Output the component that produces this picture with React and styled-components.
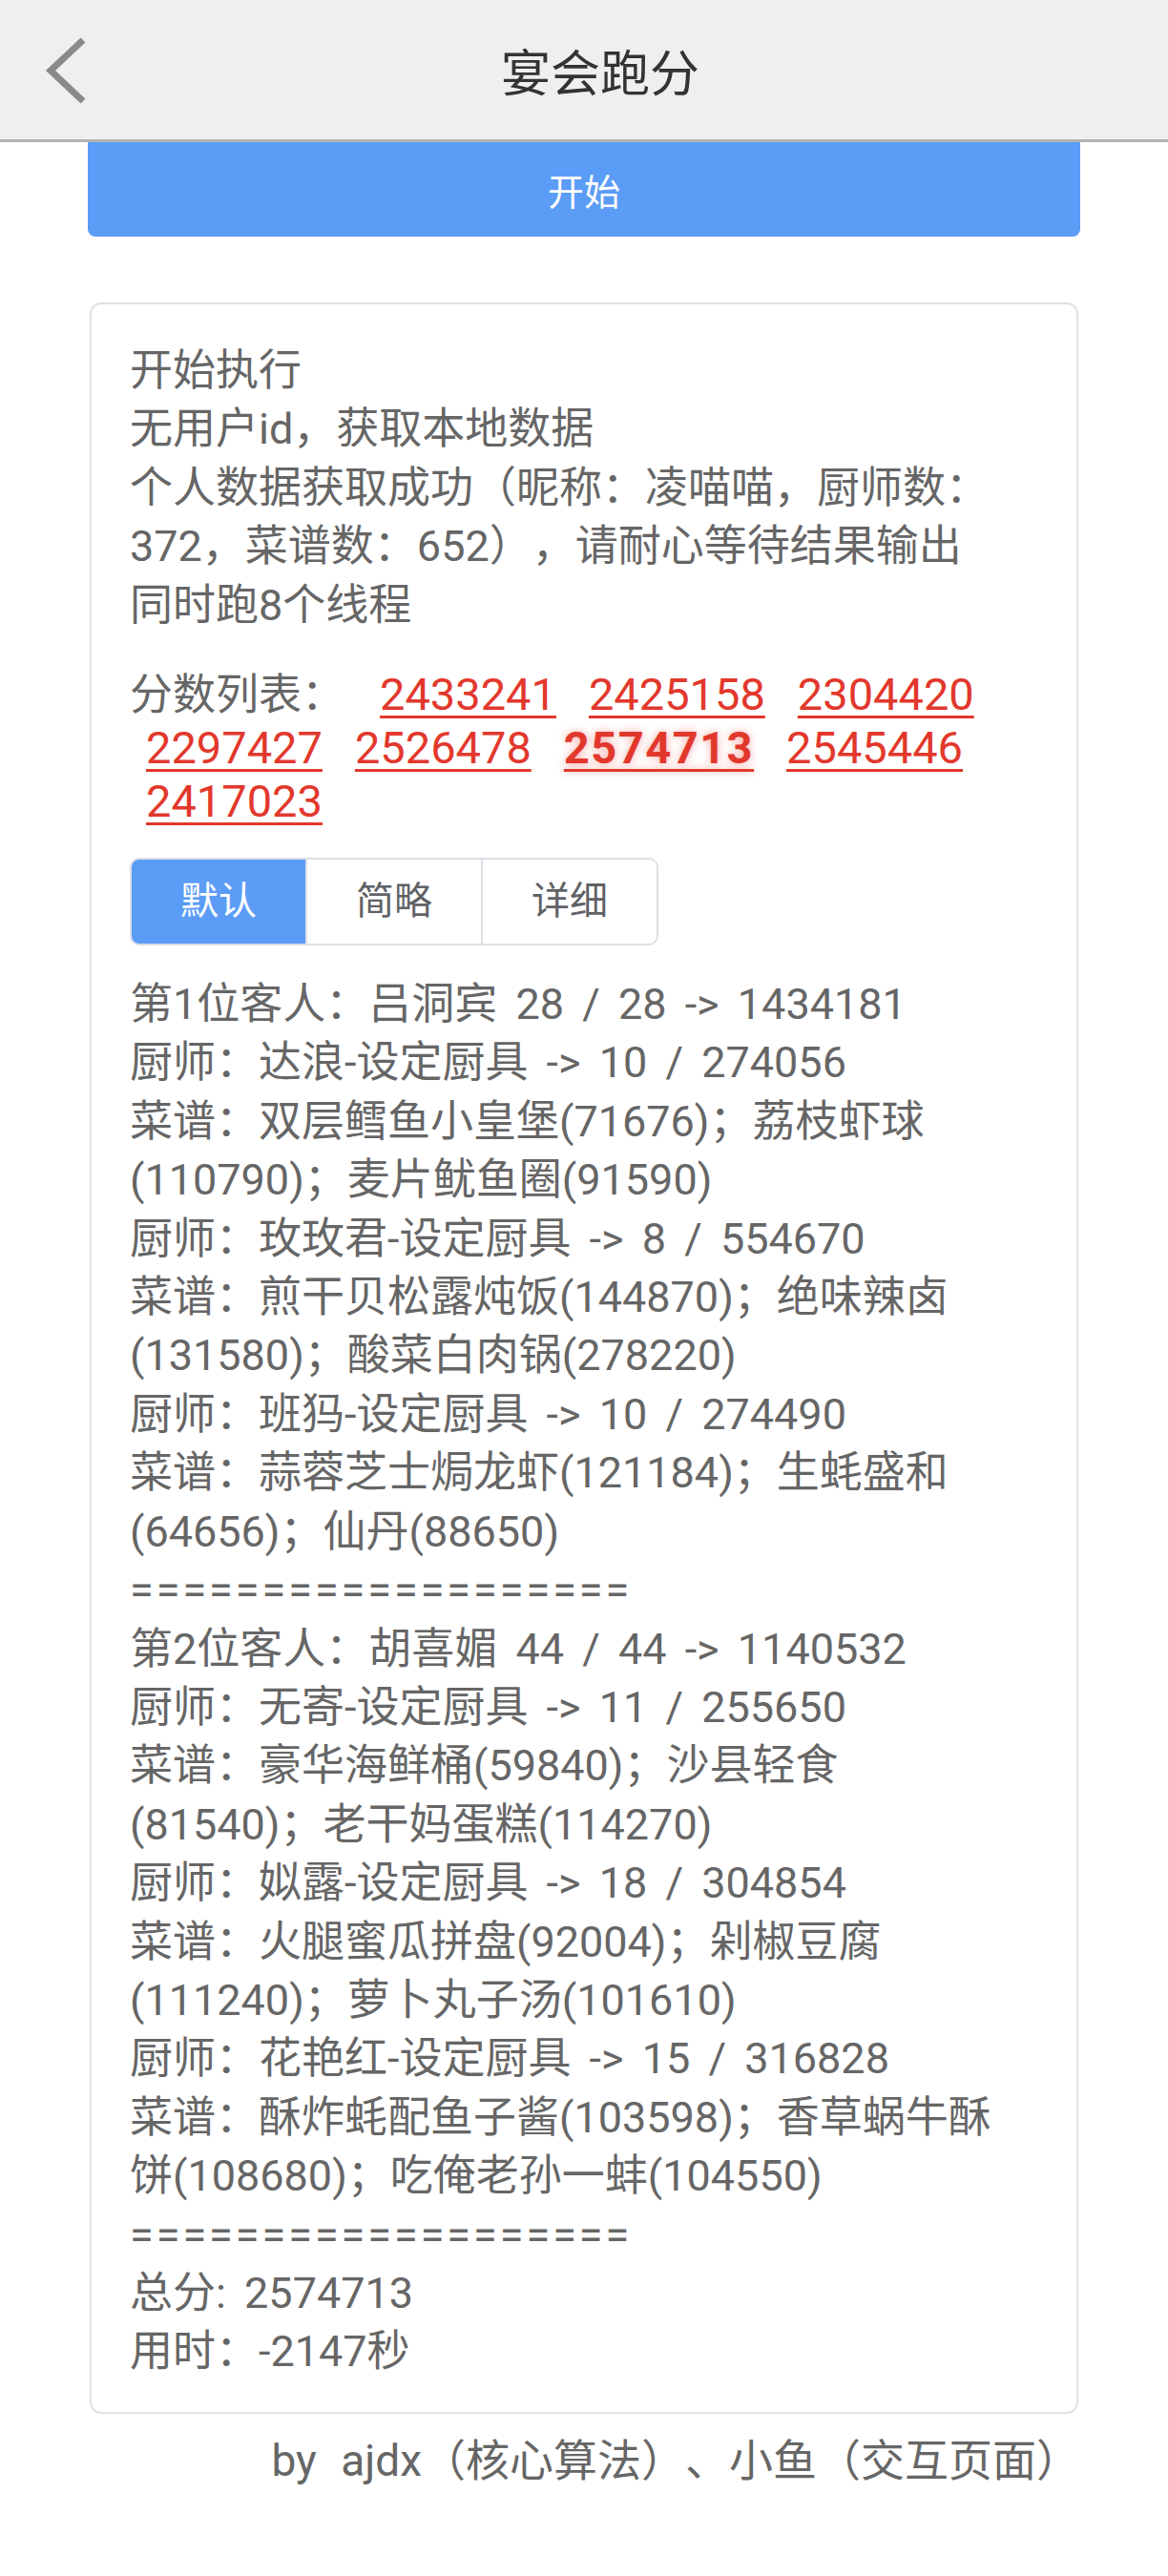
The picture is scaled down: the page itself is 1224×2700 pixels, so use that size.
import React, { useState } from "react";
import styled, { createGlobalStyle } from "styled-components";

const GlobalStyle = createGlobalStyle`
  body {
    margin: 0;
    background: #ffffff;
    font-family: Roboto, "Noto Sans CJK SC", sans-serif;
    color: #666666;
    text-spacing-trim: space-all;
  }
`;

const scores = [2433241, 2425158, 2304420, 2297427, 2526478, 2574713, 2545446, 2417023];
const best = 2574713;

const logLines = [
  "开始执行",
  "无用户id，获取本地数据",
  "个人数据获取成功（昵称：凌喵喵，厨师数：372，菜谱数：652），请耐心等待结果输出",
  "同时跑8个线程",
];

const resultLines = [
  "第1位客人：吕洞宾 28 / 28 -> 1434181",
  "厨师：达浪-设定厨具 -> 10 / 274056",
  "菜谱：双层鳕鱼小皇堡(71676)；荔枝虾球(110790)；麦片鱿鱼圈(91590)",
  "厨师：玫玫君-设定厨具 -> 8 / 554670",
  "菜谱：煎干贝松露炖饭(144870)；绝味辣卤(131580)；酸菜白肉锅(278220)",
  "厨师：班犸-设定厨具 -> 10 / 274490",
  "菜谱：蒜蓉芝士焗龙虾(121184)；生蚝盛和(64656)；仙丹(88650)",
  "===================",
  "第2位客人：胡喜媚 44 / 44 -> 1140532",
  "厨师：无寄-设定厨具 -> 11 / 255650",
  "菜谱：豪华海鲜桶(59840)；沙县轻食(81540)；老干妈蛋糕(114270)",
  "厨师：姒露-设定厨具 -> 18 / 304854",
  "菜谱：火腿蜜瓜拼盘(92004)；剁椒豆腐(111240)；萝卜丸子汤(101610)",
  "厨师：花艳红-设定厨具 -> 15 / 316828",
  "菜谱：酥炸蚝配鱼子酱(103598)；香草蜗牛酥饼(108680)；吃俺老孙一蚌(104550)",
  "===================",
  "总分: 2574713",
  "用时：-2147秒",
];

const modes = ["默认", "简略", "详细"];

export default function App() {
  const [mode, setMode] = useState(0);

  return (
    <>
      <GlobalStyle />
      <Header>
        <BackButton aria-label="back">
          <svg width="44" height="70" viewBox="0 0 44 70">
            <polyline points="40,3 6,35 40,67" fill="none" stroke="#8a8a8a" strokeWidth="7" />
          </svg>
        </BackButton>
        <Title>宴会跑分</Title>
        <span />
      </Header>

      <Main>
        <StartButton>开始</StartButton>

        <Card>
          <Log>
            {logLines.map((line, i) => (
              <Line key={i}>{line}</Line>
            ))}
          </Log>

          <Scores>
            <Label>分数列表：</Label>
            {scores.map((s) => (
              <Score key={s} $best={s === best}>
                {s}
              </Score>
            ))}
          </Scores>

          <RadioGroup>
            {modes.map((m, i) => (
              <RadioButton key={m} $active={i === mode} onClick={() => setMode(i)}>
                {m}
              </RadioButton>
            ))}
          </RadioGroup>

          <Log $top={31}>
            {resultLines.map((line, i) => (
              <Line key={i} $rule={line.startsWith("=")}>
                {line}
              </Line>
            ))}
          </Log>
        </Card>

        <Footer>by ajdx（核心算法）、小鱼（交互页面）</Footer>
      </Main>
    </>
  );
}

const Header = styled.header`
  height: 146px;
  background: #efefef;
  border-bottom: 3px solid #b3b3b3;
  display: grid;
  grid-template-columns: 110px 1fr 76px;
  align-items: center;
`;

const BackButton = styled.div`
  display: flex;
  align-items: center;
  padding-left: 47px;
  padding-top: 2px;
`;

const Title = styled.h1`
  margin: 0;
  text-align: center;
  font-size: 52px;
  font-weight: 400;
  color: #333333;
`;

const Main = styled.main`
  width: 1040px;
  margin: 0 auto;
  padding-bottom: 60px;
`;

const StartButton = styled.button`
  display: block;
  width: 100%;
  height: 99px;
  border: none;
  border-radius: 0 0 8px 8px;
  background: #5b9cf6;
  color: #ffffff;
  font-family: inherit;
  font-size: 38px;
  cursor: pointer;
`;

const Card = styled.section`
  margin: 69px 2px 0;
  border: 2px solid #e2e2e2;
  border-radius: 12px;
  padding: 39px 62px 32px 40px;
  font-size: 45px;
  line-height: 61.4px;
`;

const Log = styled.div`
  margin-top: ${(p) => (p.$top ? `${p.$top}px` : "0")};
  word-spacing: 8px;
`;

const Line = styled.div`
  letter-spacing: ${(p) => (p.$rule ? "3px" : "normal")};
`;

const Scores = styled.div`
  margin-top: 35px;
  line-height: 55px;
`;

const Label = styled.span`
  margin-right: 20px;
`;

const Score = styled.span`
  display: inline-block;
  margin: 0 17px;
  font-size: 47px;
  color: #e2382c;
  text-decoration: underline;
  text-decoration-thickness: 3px;
  text-underline-offset: 6px;
  font-weight: ${(p) => (p.$best ? 700 : 400)};
  letter-spacing: ${(p) => (p.$best ? "1.5px" : "normal")};
  text-shadow: ${(p) => (p.$best ? "0 0 8px rgba(226, 56, 44, 0.45)" : "none")};
`;

const RadioGroup = styled.div`
  display: inline-flex;
  margin-top: 31px;
  border: 2px solid #dcdfe6;
  border-radius: 10px;
  overflow: hidden;
`;

const RadioButton = styled.div`
  width: 182px;
  height: 88px;
  display: flex;
  align-items: center;
  justify-content: center;
  font-size: 40px;
  color: ${(p) => (p.$active ? "#ffffff" : "#606266")};
  background: ${(p) => (p.$active ? "#5b9cf6" : "#ffffff")};
  cursor: pointer;

  & + & {
    border-left: 2px solid #dcdfe6;
  }
`;

const Footer = styled.div`
  margin-top: 18px;
  text-align: right;
  font-size: 46px;
  line-height: 62px;
  word-spacing: 14px;
  color: #666666;
`;
